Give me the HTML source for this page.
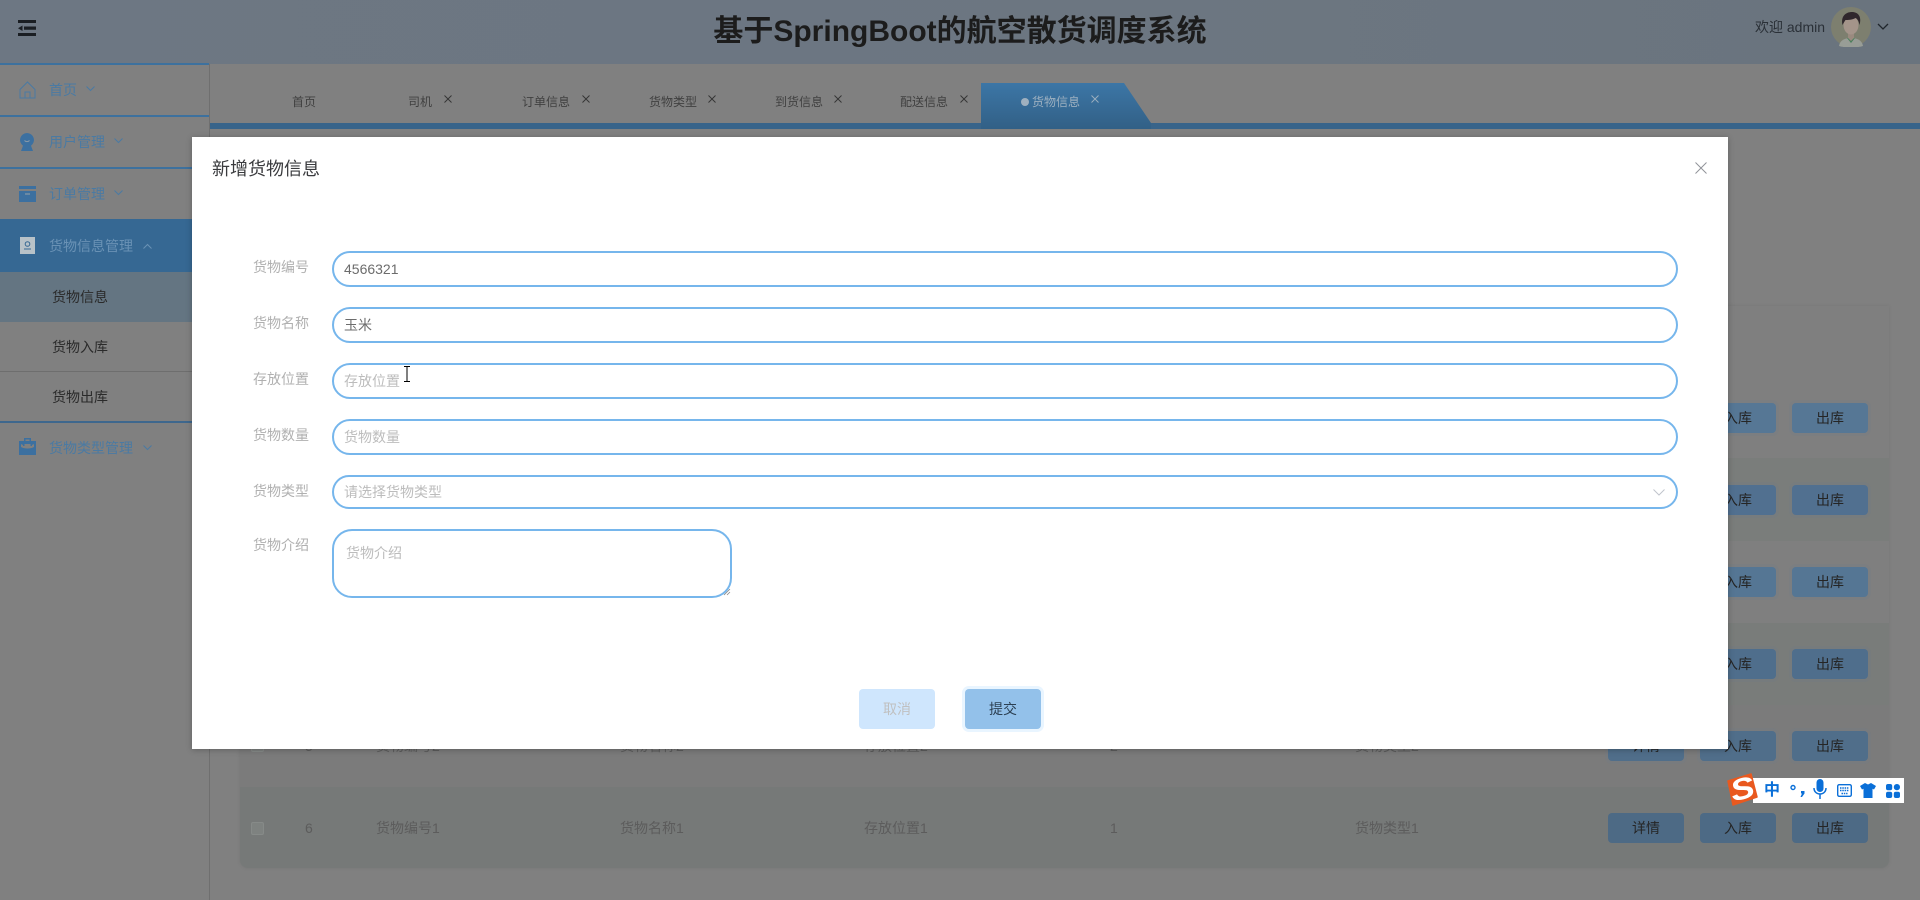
<!DOCTYPE html>
<html lang="zh-CN">
<head>
<meta charset="utf-8">
<title>基于SpringBoot的航空散货调度系统</title>
<style>
html,body{margin:0;padding:0;width:1920px;height:900px;overflow:hidden;background:#808080;}
body{position:relative;font-family:"Liberation Sans","Noto Sans CJK SC",sans-serif;font-size:14px;color:#333;}
div,span,svg{position:absolute;display:block;box-sizing:border-box;}
.t{line-height:20px;height:20px;white-space:nowrap;}
.m{color:#4a7aa3;}
.s{color:#2a2a2a;}
.tb{color:#404040;}
.lb{color:#b0b0b0;left:253px;}
.in{left:332px;width:1346px;height:36px;border:2px solid #76b6ec;border-radius:18px;background:#fff;}
.ph{color:#bcbcbc;left:344px;}
.val{color:#6c6c6c;left:344px;}
.row{left:240px;width:1649px;height:82px;}
.b{width:76px;height:30px;border-radius:4px;background:#567795;box-shadow:0 0 0 3px rgba(100,125,150,.12);color:#252525;line-height:30px;text-align:center;font-size:14px;}
.td{color:#5c5c5c;}
.cb{left:251px;width:13px;height:13px;border:1px solid #868a88;border-radius:2px;background:#7e8280;}
.ic{fill:#3c70a0;}
</style>
</head>
<body>

<!-- header -->
<div style="left:0;top:0;width:1920px;height:64px;background:linear-gradient(90deg,#6d7783,#6c7681 60%,#6a747e);"></div>
<svg style="left:18px;top:20px" width="18" height="16" viewBox="0 0 18 16"><path fill="#1a1e23" d="M0 0h18v3H0zM6 6.500h12v3.300H6zM0 13h18v3H0zM4.500 5.500v5.500L0 8.200z"/></svg>
<div class="t" style="left:0;width:1920px;top:17px;height:30px;line-height:30px;text-align:center;font-size:30px;font-weight:bold;color:#1c1c1c;">基于SpringBoot的航空散货调度系统</div>
<div class="t" style="left:1755px;top:17px;color:#2a3037;">欢迎 admin</div>
<svg style="left:1831px;top:7px" width="40" height="40" viewBox="0 0 40 40">
<circle cx="20" cy="20" r="20" fill="#7d7f6f"/>
<path d="M8 39c1-6 6-8 12-8s11 2 12 8c-6 2-18 2-24 0z" fill="#989d96"/>
<path d="M16 31l4 5 4-5z" fill="#4a7f5c"/>
<path d="M17 25h6v6l-3 3-3-3z" fill="#9a8a7f"/>
<ellipse cx="20" cy="18" rx="7.500" ry="9.500" fill="#a4948a"/>
<path d="M11.500 18C9.500 9 15 5 21 5c6 0 10 4.500 7.500 13-.7-4-2-6-4-7-3 2-8 2-10 2-1 1.500-2 3-3 5z" fill="#30272c"/>
</svg>
<svg style="left:1877px;top:23px" width="12" height="8" viewBox="0 0 12 8"><path d="M1 1l5 5 5-5" fill="none" stroke="#20262c" stroke-width="1.300"/></svg>

<!-- sidebar -->
<div style="left:209px;top:64px;width:1px;height:836px;background:#6f6f6f;"></div>
<div style="left:0;top:63px;width:209px;height:2px;background:#3d719e;"></div>
<div style="left:0;top:115px;width:209px;height:2px;background:#3d719e;"></div>
<div style="left:0;top:167px;width:209px;height:2px;background:#3d719e;"></div>
<div style="left:0;top:219px;width:209px;height:53px;background:#366893;"></div>
<div style="left:0;top:272px;width:209px;height:50px;background:#647582;"></div>
<div style="left:0;top:371px;width:209px;height:1px;background:#6e6e6e;"></div>
<div style="left:0;top:421px;width:209px;height:2px;background:#3e678d;"></div>

<svg style="left:19px;top:81px" width="17" height="18" viewBox="0 0 17 18"><path d="M1 8.500L8.500 1 16 8.500V17H1zM6 17v-6h5v6" fill="none" stroke="#4a7aa3" stroke-width="1"/></svg>
<div class="t m" style="left:49px;top:80px;">首页</div>
<svg style="left:86px;top:86px" width="9" height="6" viewBox="0 0 9 6"><path d="M.5.5l4 4 4-4" fill="none" stroke="#4a7aa3" stroke-width="1"/></svg>

<svg style="left:20px;top:133px" width="14" height="18" viewBox="0 0 14 18"><path class="ic" d="M7 0a7 7 0 0 1 4 12.700L13 18H1l2-5.300A7 7 0 0 1 7 0z"/><path d="M4.500 7.500c1.500 1.500 3.500 1.500 5 0" fill="none" stroke="#8a9aa8" stroke-width="1"/></svg>
<div class="t m" style="left:49px;top:132px;">用户管理</div>
<svg style="left:114px;top:138px" width="9" height="6" viewBox="0 0 9 6"><path d="M.5.5l4 4 4-4" fill="none" stroke="#4a7aa3" stroke-width="1"/></svg>

<svg style="left:19px;top:186px" width="17" height="16" viewBox="0 0 17 16"><path class="ic" d="M0 0h17v3H0zM0 5h17v11H0z"/><path d="M6 8h5" stroke="#8a9aa8" stroke-width="1.200"/></svg>
<div class="t m" style="left:49px;top:184px;">订单管理</div>
<svg style="left:114px;top:190px" width="9" height="6" viewBox="0 0 9 6"><path d="M.5.5l4 4 4-4" fill="none" stroke="#4a7aa3" stroke-width="1"/></svg>

<svg style="left:20px;top:237px" width="15" height="17" viewBox="0 0 15 17"><path fill="#b8c2c8" d="M0 0h15v17H0z"/><circle cx="7.500" cy="7" r="2.300" fill="none" stroke="#366893"/><path d="M4 12h7" stroke="#366893"/></svg>
<div class="t" style="left:49px;top:236px;color:#6a92b5;">货物信息管理</div>
<svg style="left:143px;top:243px" width="9" height="6" viewBox="0 0 9 6"><path d="M.5 5.500l4-4 4 4" fill="none" stroke="#6a92b5" stroke-width="1"/></svg>

<div class="t s" style="left:52px;top:287px;">货物信息</div>
<div class="t s" style="left:52px;top:337px;">货物入库</div>
<div class="t s" style="left:52px;top:387px;">货物出库</div>

<svg style="left:19px;top:438px" width="17" height="17" viewBox="0 0 17 17"><path class="ic" fill-rule="evenodd" d="M5 3V0h7v3h5v14H0V3zM6.500 1.500V3h4V1.500zM2 6v3c3 2 10 2 13 0V6l-2 1v1h-1.500V6h-6v2H4V7z"/></svg>
<div class="t m" style="left:49px;top:438px;">货物类型管理</div>
<svg style="left:143px;top:445px" width="9" height="6" viewBox="0 0 9 6"><path d="M.5.5l4 4 4-4" fill="none" stroke="#4a7aa3" stroke-width="1"/></svg>

<!-- tabs -->
<div style="left:210px;top:123px;width:1710px;height:6px;background:#38648a;"></div>
<svg style="left:981px;top:83px" width="170" height="46" viewBox="0 0 170 46"><defs><linearGradient id="g" x1="0" y1="0" x2="0" y2="1"><stop offset="0" stop-color="#3c76a6"/><stop offset="1" stop-color="#326086"/></linearGradient></defs><path d="M0 0H143L170 40V46H0z" fill="url(#g)"/></svg>
<div class="t tb" style="left:292px;top:92px;font-size:12px;">首页</div>
<div class="t tb" style="left:408px;top:92px;font-size:12px;">司机</div>
<div class="t tb" style="left:522px;top:92px;font-size:12px;">订单信息</div>
<div class="t tb" style="left:649px;top:92px;font-size:12px;">货物类型</div>
<div class="t tb" style="left:775px;top:92px;font-size:12px;">到货信息</div>
<div class="t tb" style="left:900px;top:92px;font-size:12px;">配送信息</div>
<div style="left:1021px;top:98px;width:8px;height:8px;border-radius:50%;background:#9fb0bf;"></div>
<div class="t" style="left:1032px;top:92px;font-size:12px;color:#9db0c0;">货物信息</div>
<svg style="left:444px;top:95px" width="8" height="8" viewBox="0 0 8 8"><path d="M.5.5l7 7M7.500.5l-7 7" stroke="#333" stroke-width=".9"/></svg>
<svg style="left:582px;top:95px" width="8" height="8" viewBox="0 0 8 8"><path d="M.5.5l7 7M7.500.5l-7 7" stroke="#333" stroke-width=".9"/></svg>
<svg style="left:708px;top:95px" width="8" height="8" viewBox="0 0 8 8"><path d="M.5.5l7 7M7.500.5l-7 7" stroke="#333" stroke-width=".9"/></svg>
<svg style="left:834px;top:95px" width="8" height="8" viewBox="0 0 8 8"><path d="M.5.5l7 7M7.500.5l-7 7" stroke="#333" stroke-width=".9"/></svg>
<svg style="left:960px;top:95px" width="8" height="8" viewBox="0 0 8 8"><path d="M.5.5l7 7M7.500.5l-7 7" stroke="#333" stroke-width=".9"/></svg>
<svg style="left:1091px;top:95px" width="8" height="8" viewBox="0 0 8 8"><path d="M.5.5l7 7M7.500.5l-7 7" stroke="#9db0c0" stroke-width=".9"/></svg>

<!-- table card -->
<div style="left:240px;top:306px;width:1649px;height:562px;border-radius:0 0 8px 8px;background:#7f7f7f;box-shadow:0 0 4px rgba(0,0,0,.08);"></div>
<div class="row" style="top:458px;height:83px;background:#7a7d7b;"></div>
<div class="row" style="top:623px;background:#797c7a;"></div>
<div class="row" style="top:705px;background:#7b7b7b;"></div>
<div class="row" style="top:787px;height:81px;background:#767978;border-radius:0 0 8px 8px;"></div>

<div class="b" style="left:1608px;top:403px;">详情</div><div class="b" style="left:1700px;top:403px;">入库</div><div class="b" style="left:1792px;top:403px;">出库</div>
<div class="b" style="left:1608px;top:485px;">详情</div><div class="b" style="left:1700px;top:485px;background:#517090;">入库</div><div class="b" style="left:1792px;top:485px;background:#517090;">出库</div>
<div class="b" style="left:1608px;top:567px;">详情</div><div class="b" style="left:1700px;top:567px;background:#557694;">入库</div><div class="b" style="left:1792px;top:567px;background:#557694;">出库</div>
<div class="b" style="left:1608px;top:649px;">详情</div><div class="b" style="left:1700px;top:649px;background:#4f6e8c;">入库</div><div class="b" style="left:1792px;top:649px;background:#4f6e8c;">出库</div>
<div class="b" style="left:1608px;top:731px;background:#506e8a;">详情</div><div class="b" style="left:1700px;top:731px;background:#506e8a;">入库</div><div class="b" style="left:1792px;top:731px;background:#506e8a;">出库</div>
<div class="b" style="left:1608px;top:813px;background:#4d6a85;box-shadow:none;">详情</div><div class="b" style="left:1700px;top:813px;background:#4d6a85;box-shadow:none;">入库</div><div class="b" style="left:1792px;top:813px;background:#4d6a85;box-shadow:none;">出库</div>

<div class="cb" style="top:739px;"></div>
<div class="t td" style="left:305px;top:736px;">5</div>
<div class="t td" style="left:376px;top:736px;">货物编号2</div>
<div class="t td" style="left:620px;top:736px;">货物名称2</div>
<div class="t td" style="left:864px;top:736px;">存放位置2</div>
<div class="t td" style="left:1110px;top:736px;">2</div>
<div class="t td" style="left:1355px;top:736px;">货物类型2</div>

<div class="cb" style="top:822px;"></div>
<div class="t td" style="left:305px;top:818px;">6</div>
<div class="t td" style="left:376px;top:818px;">货物编号1</div>
<div class="t td" style="left:620px;top:818px;">货物名称1</div>
<div class="t td" style="left:864px;top:818px;">存放位置1</div>
<div class="t td" style="left:1110px;top:818px;">1</div>
<div class="t td" style="left:1355px;top:818px;">货物类型1</div>

<!-- modal -->
<div style="left:192px;top:137px;width:1536px;height:612px;background:#fff;box-shadow:0 1px 6px rgba(0,0,0,.25);"></div>
<div class="t" style="left:212px;top:159px;font-size:18px;color:#3a3b3e;">新增货物信息</div>
<svg style="left:1695px;top:162px" width="12" height="12" viewBox="0 0 12 12"><path d="M.5.5l11 11M11.500.5l-11 11" stroke="#909399" stroke-width="1"/></svg>

<div class="t lb" style="top:257px;">货物编号</div>
<div class="in" style="top:251px;"></div>
<div class="t val" style="top:259px;">4566321</div>

<div class="t lb" style="top:313px;">货物名称</div>
<div class="in" style="top:307px;"></div>
<div class="t val" style="top:315px;">玉米</div>

<div class="t lb" style="top:369px;">存放位置</div>
<div class="in" style="top:363px;"></div>
<div class="t ph" style="top:371px;">存放位置</div>

<div class="t lb" style="top:425px;">货物数量</div>
<div class="in" style="top:419px;"></div>
<div class="t ph" style="top:427px;">货物数量</div>

<div class="t lb" style="top:481px;">货物类型</div>
<div class="in" style="top:475px;height:34px;border-radius:17px;"></div>
<div class="t ph" style="top:482px;">请选择货物类型</div>
<svg style="left:1653px;top:489px" width="12" height="7" viewBox="0 0 12 7"><path d="M.5.5L6 6 11.500.5" fill="none" stroke="#c0c4cc" stroke-width="1"/></svg>

<div class="t lb" style="top:535px;">货物介绍</div>
<div style="left:332px;top:529px;width:400px;height:69px;border:2px solid #76b6ec;border-radius:20px;background:#fff;"></div>
<div class="t ph" style="left:346px;top:543px;">货物介绍</div>
<svg style="left:723px;top:588px" width="8" height="8" viewBox="0 0 8 8"><path d="M1 7l6-6M4 7l3-3" stroke="#888" stroke-width=".8"/></svg>

<svg style="left:403px;top:366px" width="8" height="16" viewBox="0 0 8 16"><path d="M1 .5h6M1 15.500h6M4 .5v15" stroke="#000" stroke-width="1" fill="none"/></svg>

<div style="left:859px;top:689px;width:76px;height:40px;border-radius:4px;background:#cfe6fd;color:#c0c0c0;line-height:40px;text-align:center;">取消</div>
<div style="left:965px;top:689px;width:76px;height:40px;border-radius:4px;background:#93c1ea;box-shadow:0 0 0 3px #e9f5ff;color:#2c4053;line-height:40px;text-align:center;">提交</div>

<!-- IME bar -->
<div style="left:1753px;top:778px;width:151px;height:25px;background:#fff;"></div>
<svg style="left:1727px;top:773px" width="31" height="33" viewBox="0 0 31 33"><path d="M1 8L24 1 30 24 6 32z" fill="#e9591f" stroke="#e9591f" stroke-width="1.500" stroke-linejoin="round"/></svg>
<div style="left:1727px;top:775px;width:31px;height:29px;color:#fff;font:italic bold 30px/29px 'Liberation Sans',sans-serif;text-align:center;transform:rotate(-14deg) scaleX(1.2);">S</div>
<div style="left:1764px;top:781px;width:16px;height:20px;line-height:20px;font-size:16px;font-weight:bold;color:#0a6fd8;text-align:center;">中</div>
<svg style="left:1790px;top:784px" width="16" height="14" viewBox="0 0 16 14"><circle cx="3" cy="3.500" r="2" fill="none" stroke="#0a6fd8" stroke-width="1.400"/><path d="M11 7h3.500v2.500L12 13h-1.500l1.500-3.500h-1z" fill="#0a6fd8"/></svg>
<svg style="left:1813px;top:779px" width="14" height="21" viewBox="0 0 14 21"><rect x="3.500" y="0" width="7" height="13" rx="3.500" fill="#0a6fd8"/><path d="M1 9c0 8 12 8 12 0M7 15v5" fill="none" stroke="#0a6fd8" stroke-width="1.500"/></svg>
<svg style="left:1837px;top:784px" width="15" height="13" viewBox="0 0 15 13"><rect x=".7" y=".7" width="13.600" height="11.600" rx="1.500" fill="none" stroke="#0a6fd8" stroke-width="1.400"/><path d="M3 4h9M3 6.500h9M4.500 9.500h6" stroke="#0a6fd8" stroke-width="1.500" stroke-dasharray="1.500 .8"/></svg>
<svg style="left:1860px;top:783px" width="16" height="15" viewBox="0 0 16 15"><path d="M5 0l3 1.500L11 0l5 3-2 3.500-1.500-.8V15h-9V5.700L2 6.500 0 3z" fill="#0a6fd8"/></svg>
<svg style="left:1886px;top:784px" width="14" height="14" viewBox="0 0 14 14"><rect width="6.200" height="6.200" rx="2" fill="#0a6fd8"/><rect x="7.800" width="6.200" height="6.200" rx="3" fill="#0a6fd8"/><rect y="7.800" width="6.200" height="6.200" rx="2" fill="#0a6fd8"/><rect x="7.800" y="7.800" width="6.200" height="6.200" rx="2" fill="#0a6fd8"/></svg>

</body>
</html>
